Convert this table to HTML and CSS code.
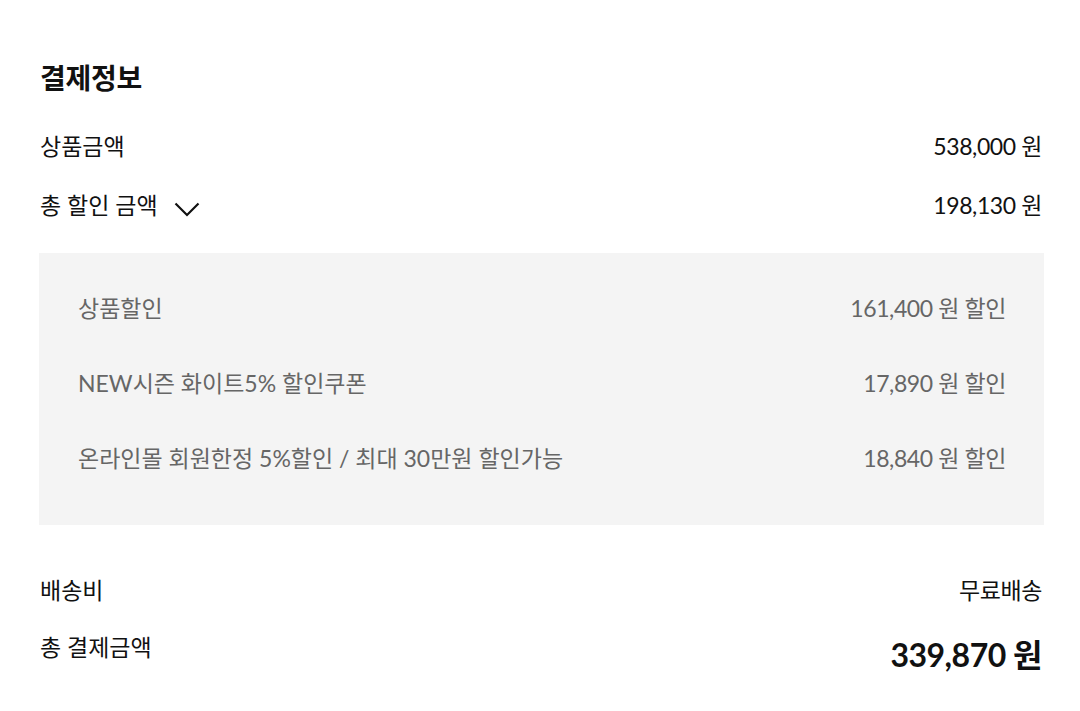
FILE: index.html
```html
<!DOCTYPE html>
<html lang="ko">
<head>
<meta charset="utf-8">
<link rel="stylesheet" href="styles.css">
</head>
<body>
<section class="pay">
  <h2 class="title">결제정보</h2>
  <div class="row first">
    <span class="label">상품금액</span>
    <span class="value">538,000 원</span>
  </div>
  <div class="row second">
    <span class="label toggle">총 할인 금액
      <svg class="chev" width="26" height="15" viewBox="0 0 26 15"><path d="M1.5 1.5 L13 13 L24.5 1.5" fill="none" stroke="#111" stroke-width="2.2"/></svg>
    </span>
    <span class="value">198,130 원</span>
  </div>
  <div class="box">
    <div class="sub">
      <span>상품할인</span>
      <span>161,400 원 할인</span>
    </div>
    <div class="sub">
      <span>NEW시즌 화이트5% 할인쿠폰</span>
      <span>17,890 원 할인</span>
    </div>
    <div class="sub">
      <span>온라인몰 회원한정 5%할인 / 최대 30만원 할인가능</span>
      <span>18,840 원 할인</span>
    </div>
  </div>
  <div class="row ship">
    <span class="label">배송비</span>
    <span class="value">무료배송</span>
  </div>
  <div class="row total">
    <span class="label">총 결제금액</span>
    <span class="big">339,870 원</span>
  </div>
</section>
</body>
</html>
```
FILE: styles.css
```css
* { box-sizing: border-box; }
html, body { margin: 0; padding: 0; background: #fff; }
body {
  font-family: Lato, "Noto Sans CJK KR", sans-serif;
  color: #111;
  width: 1080px;
}
.pay {
  padding: 60px 36px 0 39px;
}
.title {
  margin: 0 0 0 1px;
  font-family: "Noto Sans CJK KR", sans-serif;
  font-size: 28px;
  font-weight: 700;
  line-height: 34px;
  letter-spacing: -0.3px;
}
.row {
  display: flex;
  justify-content: space-between;
  align-items: center;
  padding: 0 2px 0 1px;
  font-size: 23px;
  line-height: 30px;
}
.label { font-weight: 400; }
.value { letter-spacing: -0.4px; }
.row.first { margin-top: 37px; }
.row.second { margin-top: 29px; }
.toggle { display: flex; align-items: center; gap: 16px; }
.chev { margin-top: 8px; }
.box {
  margin-top: 33px;
  background: #f4f4f4;
  padding: 40px 38px 52px 39px;
  display: flex;
  flex-direction: column;
  gap: 45px;
}
.sub {
  display: flex;
  justify-content: space-between;
  align-items: center;
  font-size: 23px;
  line-height: 30px;
  color: #666;
}
.sub span:last-child { letter-spacing: -0.4px; }
.row.ship { margin-top: 50px; }
.row.total {
  margin-top: 27px;
  align-items: flex-start;
}
.big {
  font-size: 32px;
  font-weight: 700;
  line-height: 46px;
  letter-spacing: -0.5px;
}
```
